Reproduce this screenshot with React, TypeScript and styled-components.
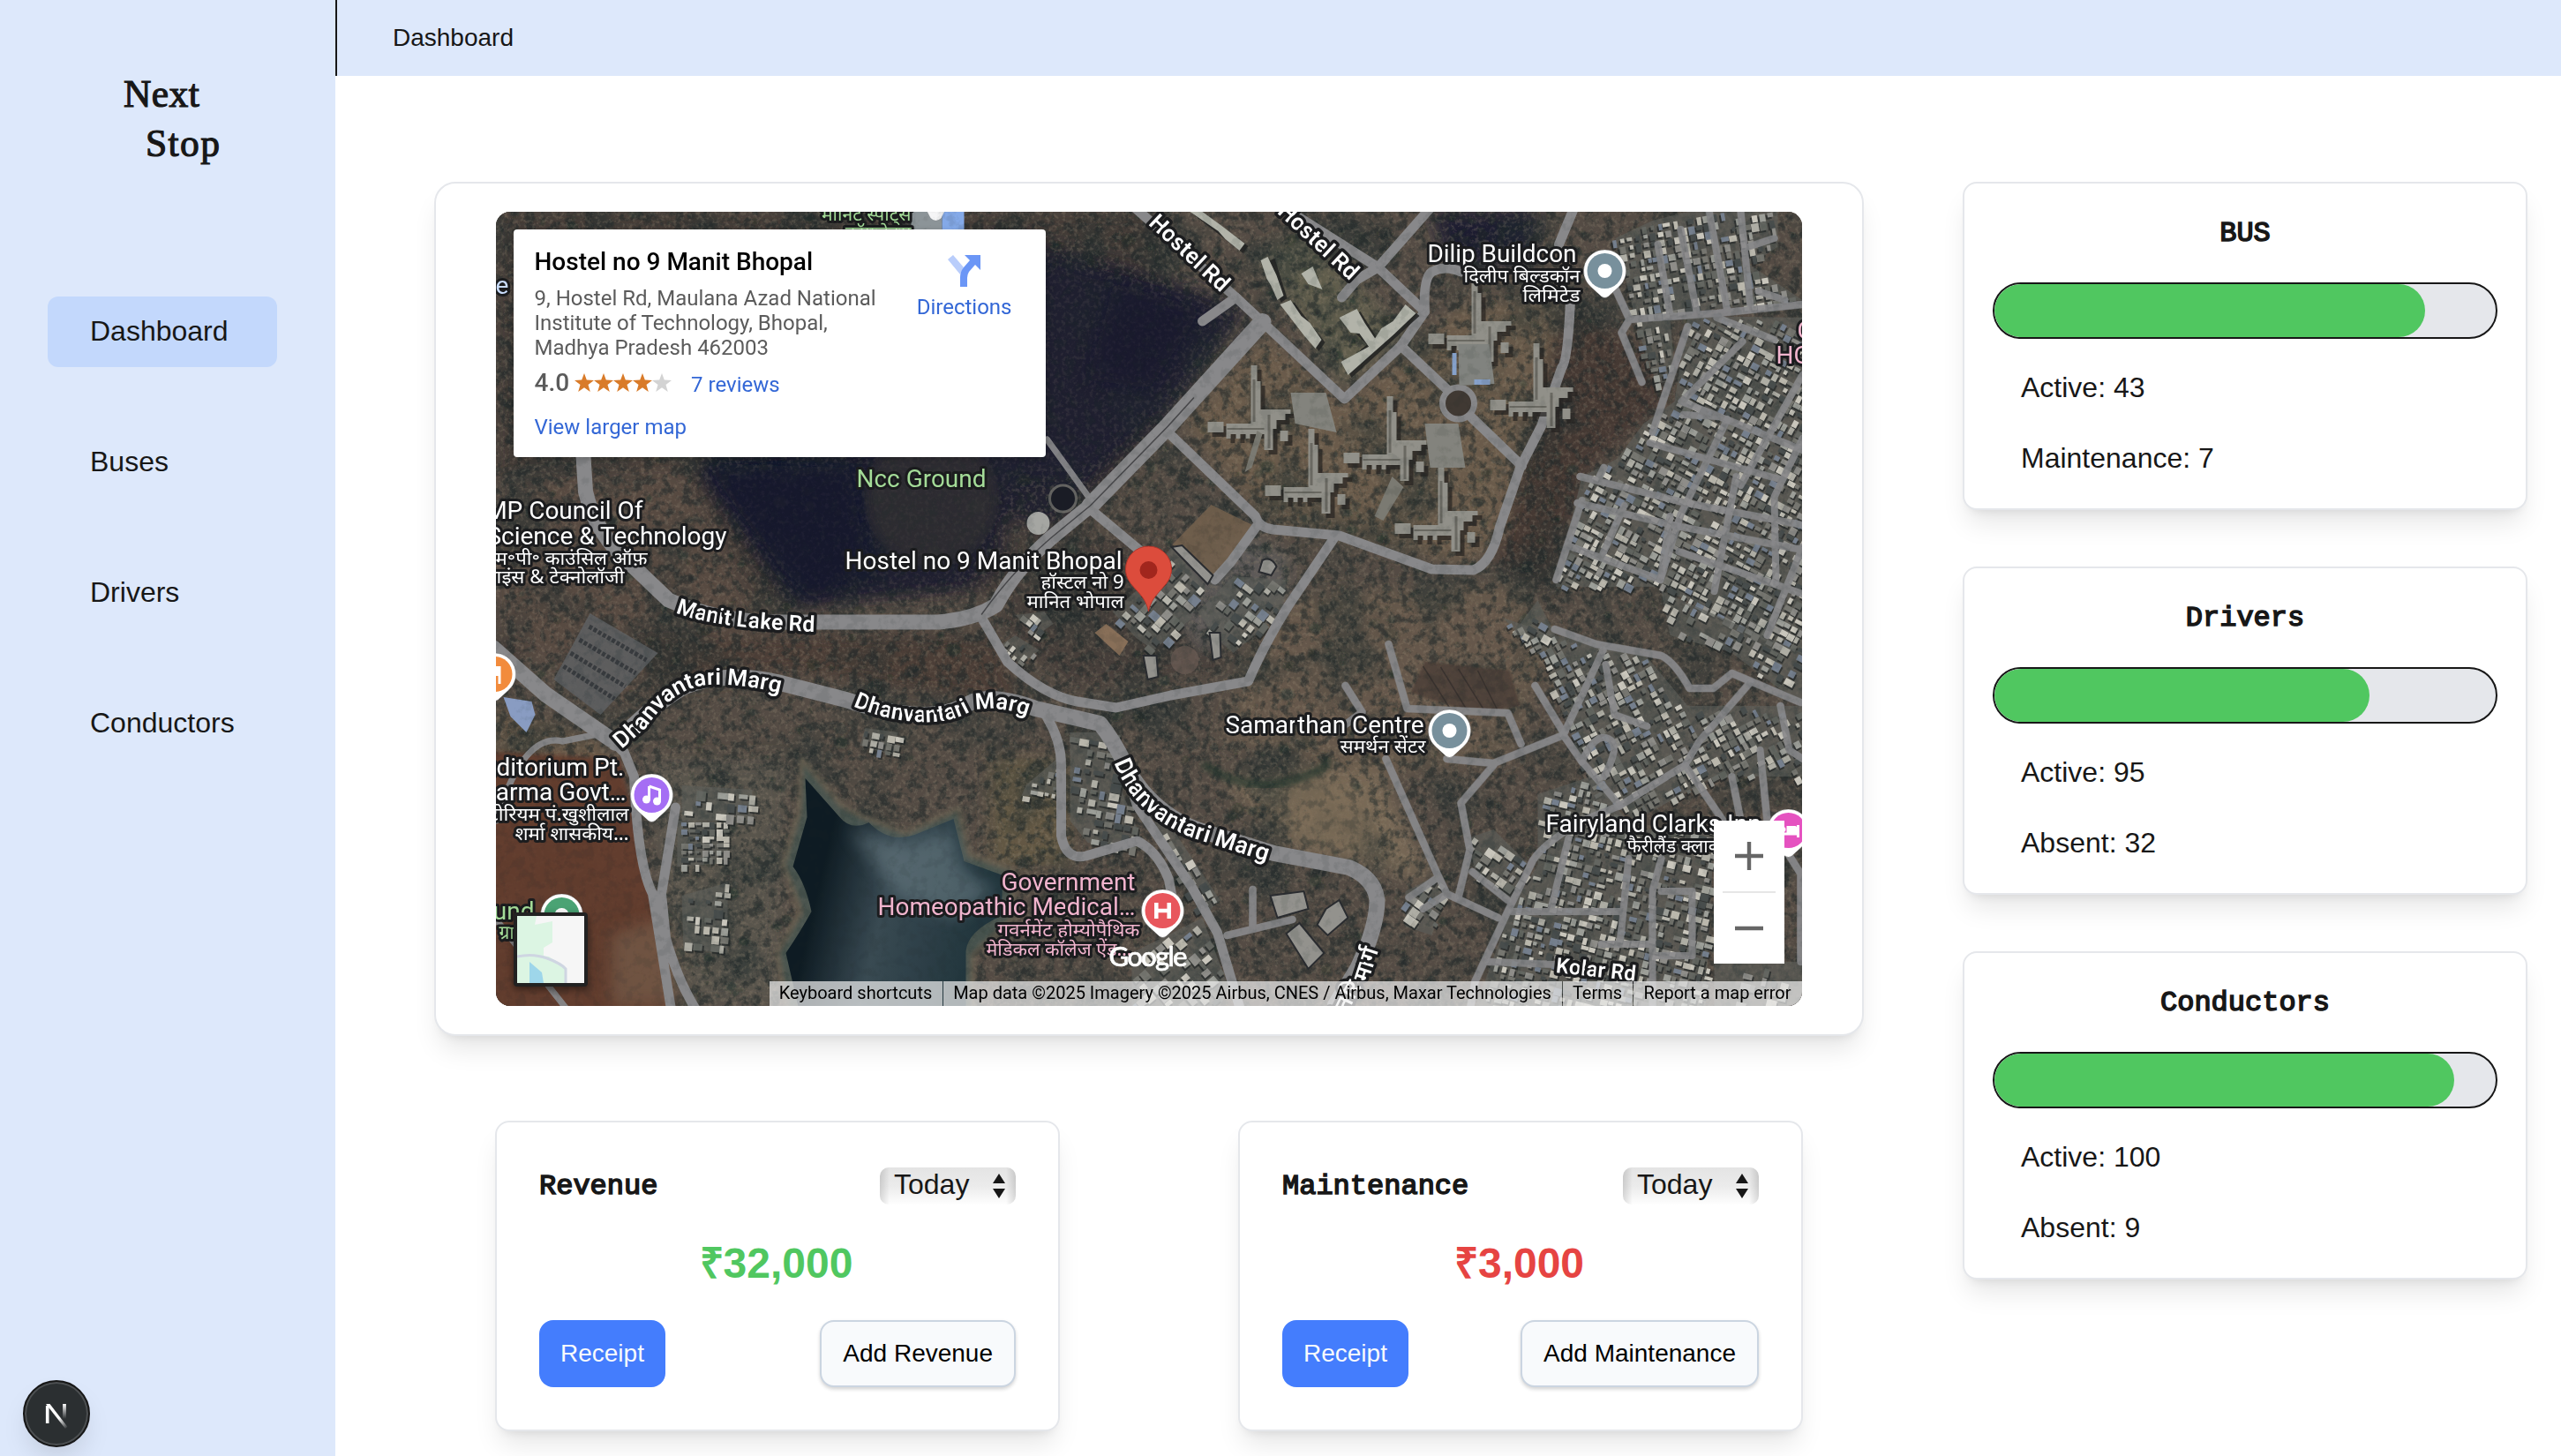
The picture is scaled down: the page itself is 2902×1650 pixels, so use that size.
import React from "react";
import styled, { createGlobalStyle } from "styled-components";

const sans = `"Liberation Sans", Arial, sans-serif`;
const roboto = `Roboto, "Noto Sans", sans-serif`;
const hindi = `"Noto Sans", "Noto Sans Devanagari", Roboto, sans-serif`;

const GlobalStyle = createGlobalStyle`
  *, *::before, *::after { box-sizing: border-box; }
  body { margin: 0; background: #fff; color: #171717; font-family: ${sans}; overflow: hidden; }
  h1, h2, p { margin: 0; }
`;

/* ---------- shell ---------- */

const Shell = styled.div`
  display: grid;
  grid-template-columns: 380px 1fr;
  height: 1650px;
  overflow: hidden;
  position: relative;
`;

const Sidebar = styled.aside`
  background: #dde8fb;
  padding: 78px 66px 0 54px;
`;

const Brand = styled.h1`
  height: 258px;
  padding-left: 86px;
  font: 400 43.5px/56px "Liberation Serif", serif;
  -webkit-text-stroke: 1.2px #171717;
`;

const BrandLine = styled.span<{ $indent?: number; $track: number }>`
  display: block;
  padding-left: ${(p) => p.$indent ?? 0}px;
  letter-spacing: ${(p) => p.$track}px;
`;

const Nav = styled.nav`
  display: flex;
  flex-direction: column;
  gap: 68px;
`;

const NavItem = styled.a<{ $active?: boolean }>`
  display: flex;
  align-items: center;
  height: 80px;
  padding: 0 0 2px 48px;
  border-radius: 12px;
  font-size: 32px;
  background: ${(p) => (p.$active ? "#c3d8fc" : "transparent")};
`;

const Page = styled.div`
  display: flex;
  flex-direction: column;
  min-width: 0;
`;

const TopBar = styled.header`
  display: flex;
  align-items: center;
  flex: none;
  height: 86px;
  padding-left: 63px;
  border-left: 2px solid #171717;
  background: #dde8fb;
  font-size: 28px;
`;

const Content = styled.main`
  display: flex;
  gap: 112px;
  padding: 120px 38px 0 112px;
`;

const Card = styled.section`
  border: 2px solid #e5e7eb;
  border-radius: 16px;
  background: #fff;
  box-shadow: 0 20px 30px -6px rgba(0, 0, 0, 0.1), 0 8px 12px -8px rgba(0, 0, 0, 0.1);
`;

const MainColumn = styled.div`
  display: flex;
  flex-direction: column;
  gap: 96px;
  width: 1620px;
  flex: none;
`;

const MapCard = styled(Card)`
  padding: 32px 68.5px 32px 67.5px;
  border-radius: 24px;
`;

const FinanceRow = styled.div`
  display: flex;
  justify-content: space-between;
  padding: 0 69px;
`;

const StatColumn = styled.div`
  display: flex;
  flex-direction: column;
  gap: 64px;
  width: 640px;
  flex: none;
`;

const Title = styled.h2`
  font: 400 32px/48px "Liberation Mono", monospace;
  padding-top: 1px;
  margin-bottom: -1px;
  -webkit-text-stroke: 1.6px #171717;
`;

/* ---------- staff / fleet cards ---------- */

const StatCard = styled(Card)`
  display: flex;
  flex-direction: column;
  gap: 32px;
  padding: 32px;
  ${Title} { text-align: center; }
`;

const Track = styled.div`
  height: 64px;
  border: 2px solid #171717;
  border-radius: 32px;
  background: #e5e7eb;
  overflow: hidden;
`;

const Fill = styled.div`
  height: 100%;
  border-radius: 32px;
  background: #50c760;
`;

const StatLine = styled.p`
  padding-left: 32px;
  height: 48px;
  font-size: 32px;
  line-height: 46px;
`;

interface Stat {
  title: string;
  active: number;
  restLabel: string;
  rest: number;
}

const stats: Stat[] = [
  { title: "BUS", active: 43, restLabel: "Maintenance", rest: 7 },
  { title: "Drivers", active: 95, restLabel: "Absent", rest: 32 },
  { title: "Conductors", active: 100, restLabel: "Absent", rest: 9 },
];

function StatPanel({ stat }: { stat: Stat }) {
  const share = (stat.active / (stat.active + stat.rest)) * 100;
  return (
    <StatCard>
      <Title>{stat.title}</Title>
      <Track>
        <Fill style={{ width: `${share}%` }} />
      </Track>
      <StatLine>Active: {stat.active}</StatLine>
      <StatLine>
        {stat.restLabel}: {stat.rest}
      </StatLine>
    </StatCard>
  );
}

/* ---------- finance cards ---------- */

const FinanceCard = styled(Card)`
  display: flex;
  flex-direction: column;
  gap: 32px;
  width: 640px;
  padding: 48px;
`;

const Row = styled.div`
  display: flex;
  align-items: center;
  justify-content: space-between;
`;

const Picker = styled.div`
  display: flex;
  align-items: center;
  justify-content: space-between;
  width: 154px;
  height: 42px;
  margin: 3px 0;
  padding: 0 12px 0 16px;
  border-radius: 10px;
  background: linear-gradient(90deg, rgba(0, 0, 0, 0.13), transparent 11px, transparent 143px, rgba(0, 0, 0, 0.13)),
    linear-gradient(#e4e4e4, #ebebeb 50%, #fefefe);
  font-size: 32px;
  line-height: 38px;
  span { padding-bottom: 4px; }
`;

const Amount = styled.p<{ $tone: string }>`
  padding-right: 3px;
  text-align: center;
  font-size: 48px;
  font-weight: 700;
  line-height: 64px;
  color: ${(p) => p.$tone};
`;

const Button = styled.button<{ $primary?: boolean }>`
  height: 76px;
  padding: 0 24px;
  border: ${(p) => (p.$primary ? "0" : "2px solid #cbd5e1")};
  border-radius: 16px;
  background: ${(p) => (p.$primary ? "#447dfd" : "#f8fafc")};
  color: ${(p) => (p.$primary ? "#f8fafc" : "#000")};
  box-shadow: ${(p) => (p.$primary ? "none" : "0 2px 4px rgba(0,0,0,.1), 0 3px 5px -1px rgba(0,0,0,.1)")};
  font: 400 28px ${sans};
`;

function FinancePanel({ title, amount, tone }: { title: string; amount: string; tone: string }) {
  return (
    <FinanceCard>
      <Row>
        <Title>{title}</Title>
        <Picker>
          <span>Today</span>
          <svg width="14" height="28" viewBox="0 0 14 28" fill="#171717">
            <path d="M7 0 14 11H0ZM0 17H14L7 28Z" />
          </svg>
        </Picker>
      </Row>
      <Amount $tone={tone}>{amount}</Amount>
      <Row>
        <Button $primary>Receipt</Button>
        <Button>Add {title}</Button>
      </Row>
    </FinanceCard>
  );
}

/* ---------- satellite map ---------- */

const MapFrame = styled.div`
  position: relative;
  width: 1480px;
  height: 900px;
  border-radius: 16px;
  overflow: hidden;
  background: #3a342d;
`;

const MapCanvas = styled.svg`
  display: block;
`;

const PlaceCard = styled.div`
  position: absolute;
  left: 20px;
  top: 20px;
  width: 603px;
  height: 258px;
  padding: 21px 38px 0 24px;
  display: flex;
  justify-content: space-between;
  border-radius: 4px;
  background: #fff;
  box-shadow: 0 2px 8px -2px rgba(0, 0, 0, 0.3);
  font: 400 24px/28px ${roboto};
  color: #5b5b5b;
`;

const PlaceName = styled.div`
  font-size: 28px;
  font-weight: 500;
  line-height: 32px;
  color: #000;
  margin-bottom: 11px;
`;

const Address = styled.div`
  width: 410px;
`;

const Rating = styled.div`
  display: flex;
  align-items: center;
  height: 32px;
  margin-top: 10px;
  b { font-size: 28px; font-weight: 500; margin-right: 6px; }
`;

const MapLink = styled.a`
  color: #3367d6;
`;

const Reviews = styled(MapLink)`
  margin: 3px 0 0 22px;
`;

const LargerMap = styled(MapLink)`
  display: block;
  margin-top: 20px;
`;

const Directions = styled(MapLink)`
  display: flex;
  flex-direction: column;
  align-items: center;
  gap: 9px;
  padding-top: 8px;
`;

const ZoomBox = styled.div`
  position: absolute;
  right: 20px;
  top: 690px;
  width: 80px;
  height: 162px;
  background: #fff;
  display: grid;
  place-items: center;
`;

const LayerThumb = styled.div`
  position: absolute;
  left: 20px;
  top: 794px;
  width: 84px;
  height: 84px;
  border: 4px solid #222;
  border-radius: 4px;
  background: #f6f6f6;
  box-shadow: 0 3px 8px rgba(0, 0, 0, 0.5);
  svg { display: block; }
`;

const Attribution = styled.div`
  position: absolute;
  right: 0;
  bottom: 0;
  height: 28px;
  display: flex;
  font: 400 20px/27px ${roboto};
  color: #000;
`;

const Credit = styled.span<{ $w: number }>`
  width: ${(p) => p.$w}px;
  height: 28px;
  text-align: center;
  white-space: nowrap;
  background: rgba(240, 240, 240, 0.7);
  & + & { margin-left: 1px; }
`;

type Pt = [number, number];

function seeded(seed: number) {
  let s = seed;
  return () => {
    s = (s + 0x6d2b79f5) | 0;
    let t = Math.imul(s ^ (s >>> 15), 1 | s);
    t = (t + Math.imul(t ^ (t >>> 7), 61 | t)) ^ t;
    return ((t ^ (t >>> 14)) >>> 0) / 4294967296;
  };
}

function inside([x, y]: Pt, poly: Pt[]) {
  let hit = false;
  for (let i = 0, j = poly.length - 1; i < poly.length; j = i++) {
    const [xi, yi] = poly[i];
    const [xj, yj] = poly[j];
    if (yi > y !== yj > y && x < ((xj - xi) * (y - yi)) / (yj - yi) + xi) hit = !hit;
  }
  return hit;
}

interface District {
  poly: Pt[];
  angle: number;
  step: number;
  fill: number;
}

const districts: District[] = [
  { poly: [[1268, 30], [1310, 10], [1350, 0], [1452, 0], [1452, 40], [1420, 60], [1480, 100], [1385, 110], [1290, 118]], angle: 80, step: 9, fill: 0.85 },
  { poly: [[1290, 125], [1330, 122], [1336, 190], [1315, 195]], angle: 80, step: 9, fill: 0.9 },
  { poly: [[1350, 118], [1480, 120], [1480, 500], [1420, 480], [1320, 425], [1200, 425], [1230, 300], [1270, 280], [1300, 240], [1335, 215]], angle: 28, step: 9, fill: 0.85 },
  { poly: [[1140, 460], [1200, 480], [1300, 500], [1350, 560], [1480, 560], [1480, 640], [1380, 640], [1290, 690], [1240, 650], [1205, 560], [1190, 510]], angle: 62, step: 9, fill: 0.72 },
  { poly: [[1320, 430], [1480, 500], [1480, 560], [1400, 500], [1330, 480]], angle: 28, step: 10, fill: 0.65 },
  { poly: [[1180, 660], [1240, 640], [1290, 700], [1380, 700], [1370, 900], [1110, 900], [1150, 790], [1180, 740]], angle: 14, step: 9, fill: 0.75 },
  { poly: [[1030, 770], [1070, 750], [1075, 775], [1060, 820], [1030, 810]], angle: 35, step: 10, fill: 0.7 },
  { poly: [[1100, 710], [1130, 700], [1170, 740], [1150, 780], [1110, 750]], angle: 35, step: 10, fill: 0.5 },
  { poly: [[1380, 850], [1480, 850], [1480, 900], [1380, 900]], angle: 14, step: 11, fill: 0.5 },
  { poly: [[650, 590], [700, 590], [710, 660], [735, 720], [670, 715], [650, 690]], angle: 10, step: 11, fill: 0.8 },
  { poly: [[600, 650], [635, 620], [638, 660], [595, 662]], angle: 10, step: 8, fill: 0.85 },
  { poly: [[730, 660], [760, 690], [820, 780], [800, 800], [770, 740]], angle: 60, step: 10, fill: 0.7 },
  { poly: [[720, 840], [800, 800], [830, 880], [820, 900], [720, 900]], angle: 50, step: 11, fill: 0.5 },
  { poly: [[205, 690], [262, 692], [262, 738], [205, 742]], angle: 0, step: 8, fill: 0.95 },
  { poly: [[210, 650], [290, 655], [290, 690], [210, 690]], angle: 5, step: 12, fill: 0.75 },
  { poly: [[210, 775], [262, 760], [262, 840], [212, 835]], angle: 5, step: 10, fill: 0.6 },
  { poly: [[418, 585], [455, 590], [450, 616], [412, 605]], angle: 10, step: 9, fill: 0.9 },
  { poly: [[1180, 440], [1200, 480], [1150, 480]], angle: 30, step: 10, fill: 0.6 },
  { poly: [[698, 453], [728, 427], [765, 380], [805, 427], [785, 463], [745, 497], [725, 483]], angle: 42, step: 11, fill: 0.8 },
  { poly: [[795, 453], [835, 413], [895, 417], [891, 453], [835, 500], [812, 480]], angle: 38, step: 11, fill: 0.75 },
  { poly: [[588, 457], [621, 453], [631, 467], [611, 481]], angle: 38, step: 8, fill: 0.8 },
  { poly: [[568, 493], [588, 480], [615, 497], [595, 513]], angle: 38, step: 8, fill: 0.8 },
];

const roofs = ["#b3b2a7", "#d0cdc1", "#91908a", "#77776f", "#63665f", "#a0a29a", "#c0bdb0", "#76818f", "#454b49"];

function Housing() {
  const rnd = seeded(9);
  const out: React.ReactNode[] = [];
  districts.forEach((d, k) => {
    const a = (d.angle * Math.PI) / 180;
    const xs = d.poly.map((p) => p[0]);
    const ys = d.poly.map((p) => p[1]);
    const cx = (Math.min(...xs) + Math.max(...xs)) / 2;
    const cy = (Math.min(...ys) + Math.max(...ys)) / 2;
    out.push(<polygon key={`b${k}`} points={d.poly.join(" ")} fill="#5c5e58" opacity="0.65" />);
    for (let u = -360; u < 360; u += d.step) {
      for (let v = -360; v < 360; v += d.step) {
        const x = cx + u * Math.cos(a) - v * Math.sin(a);
        const y = cy + u * Math.sin(a) + v * Math.cos(a);
        if (!inside([x, y], d.poly) || rnd() > d.fill) continue;
        const w = d.step * (0.45 + rnd() * 0.65);
        const h = d.step * (0.4 + rnd() * 0.6);
        const c = roofs[Math.floor(rnd() * roofs.length)];
        out.push(
          <g key={`${k}-${u}-${v}`} transform={`translate(${x.toFixed(1)} ${y.toFixed(1)}) rotate(${d.angle})`}>
            <rect x={2} y={2} width={w} height={h} fill="#171b1b" opacity=".65" />
            <rect width={w} height={h} fill={c} />
          </g>,
        );
      }
    }
  });
  return <g>{out}</g>;
}

function Trees() {
  const rnd = seeded(41);
  const out: React.ReactNode[] = [];
  for (let i = 0; i < 1800; i++) {
    const x = rnd() * 1480;
    const y = rnd() * 900;
    const r = 1.5 + rnd() * rnd() * 9;
    if (x > 330 && x < 580 && y > 640) continue;
    if (x < 190 && y > 600) continue;
    out.push(
      <ellipse key={i} cx={x.toFixed(1)} cy={y.toFixed(1)} rx={r.toFixed(1)} ry={(r * 0.85).toFixed(1)}
        fill={rnd() > 0.3 ? "#1b2723" : "#2a352e"} opacity={(0.3 + rnd() * 0.4).toFixed(2)} />,
    );
  }
  return <g filter="url(#leaf)">{out}</g>;
}

/* Comb-shaped campus blocks */
function CampusBlock({ x, y }: { x: number; y: number }) {
  const shape =
    "M15-16h7v18h4v32h34v5h-6v7H44v10h-4v24H30V62H14v5h-5v-5H3v5h-5v-5h-6v5h-5V50H15ZM-34 48h18v12h-18zM48 58h9v12h-9z";
  return (
    <g transform={`translate(${x} ${y})`}>
      <path d={shape} transform="translate(5 5)" fill="#1f1d1a" opacity=".7" />
      <path d={shape} fill="#94938a" />
      <path d="M17 0h3v48h-3zM-12 55H30v2H-12zM34 40h3v38h-3z" fill="#6a6960" />
    </g>
  );
}

const wideRoads = [
  "M98 270 101 317Q112 365 153 400L195 440Q240 460 300 465H500Q540 462 566 446Q590 400 640 360L673 333 761 243 868 125",
  "M-4 494 56 547 130 598M135 602Q175 560 213 538Q260 520 318 533L396 553Q440 568 478 570 510 572 540 555 565 546 611 563L684 580Q700 600 712 626Q740 680 794 700L881 727 966 743Q995 755 998 780Q998 810 976 857L950 900",
];

const midRoads = [
  "M722-6 838 97 868 125 961 212 1025 152 1052 113 999 63 890-6",
  "M958 97 975 77 999 63 1058-4",
  "M1025 152 1078 202M1105 233 1162 288",
  "M1221-4 1204 37M1217 100Q1214 170 1207 177L1184 243 1160 290 1137 357Q1128 398 1107 406L1060 405 955 367 880 360Q864 358 860 345L758 247",
  "M1052 113Q1050 75 1060 68 1075 60 1093 68",
  "M548 457 579 510Q620 548 658 555L702 562 764 548 852 532Q870 490 897 447L949 370",
  "M861 357 832 397 814 417M838 97 800 124",
  "M673 337 740 393",
  "M130 598 145 613 156 640Q160 740 177 773L198 904M203 675 187 773 192 823Q205 870 226 904",
  "M624 573Q640 600 640 627V707Q645 735 668 730L726 713Q750 725 762 757L770 800",
  "M712 626 726 673 789 767 817 817 843 904",
];

const thinRoads = [
  "M828 820 902 802M857 768V810",
  "M1008 620 1066 750 1077 773 1135 800M1077 773 1050 790M1066 755 1034 777",
  "M1077 620 1130 625 1209 593M1130 627 1093 670 1103 723 1090 777",
  "M1254 497 1209 593 1230 623 1273 673 1347 627 1363 600 1421 533",
  "M1177 537 1209 590M1011 490 1032 563 1146 568 1161 603M962 537 981 567 950 590",
  "M1199 473 1246 490 1320 503Q1335 510 1352 540H1379L1400 523 1478 556",
  "M1257 513 1267 570 1304 583M1273 673 1230 690Q1180 720 1172 740L1146 793 1109 872 1104 900",
  "M1151 793H1273M1215 710 1195 790M1283 733 1273 830M1320 733 1310 770V900M1320 770H1355V843H1310M1252 830H1310M1124 850 1200 853",
  "M1347 627 1390 690M1230 623Q1245 590 1260 597T1255 640M1106 748 1146 780",
  "M1284 122 1383 115 1480 105M1266 83 1284 122 1275 137 1298 193M1316 37 1330 117M1342 20 1360 113M1374-2 1395 113M1410 0 1421 107M1418 40 1448 30M1430 90 1460 100",
  "M1383 120 1448 145M1412 147 1343 215 1480 270M1345 230 1385 232M1480 185 1410 310",
  "M1307 262 1454 303M1310 250 1350 130M1228 300 1348 330 1480 355M1395 235 1342 343 1319 417M1255 290 1250 300M1480 257 1448 323 1450 420",
  "M1230 327 1201 417M1278 333 1254 387M1225 330 1342 357 1480 383M1219 380 1319 417M1340 385 1480 433M1319 417 1330 345M1405 300 1380 430M1480 380 1440 480",
  "M1400 640 1410 690M1432 610 1440 690M1455 560 1465 610 1480 620M1440 690 1478 750V850",
  "M0 690Q30 590 75 600L115 592M-2 800 80 904M624 258 676 330",
];

function Label({ x, y, children, color = "#fff", size = 28, anchor = "start", font = roboto, len }: {
  x: number; y: number; children: React.ReactNode; color?: string; size?: number; anchor?: "start" | "end"; font?: string; len?: number;
}) {
  return (
    <text x={x} y={y} fill={color} fontFamily={font} fontSize={size} textAnchor={anchor} textLength={len}
      lengthAdjust={font === hindi ? "spacingAndGlyphs" : "spacing"}
      stroke="#1b1c1e" strokeWidth={6} strokeLinejoin="round" paintOrder="stroke">
      {children}
    </text>
  );
}

function Hindi(props: { x: number; y: number; children: React.ReactNode; color?: string; anchor?: "start" | "end"; len?: number }) {
  return <Label {...props} size={21} font={hindi} anchor={props.anchor ?? "end"} />;
}

function Pin({ x, y, color, children }: { x: number; y: number; color: string; children?: React.ReactNode }) {
  return (
    <g transform={`translate(${x} ${y})`}>
      <path d="M0-24A24 24 0 0 1 16 18L4 29Q0 32-4 29L-16 18A24 24 0 0 1 0-24Z" fill="#fff" stroke="#222" strokeOpacity=".3" />
      <circle r="20" fill={color} />
      {children}
    </g>
  );
}

function RoadName({ id, children, size = 26, font = roboto }: { id: string; children: React.ReactNode; size?: number; font?: string }) {
  return (
    <text fontFamily={font} fontWeight={600} fontSize={size} fill="#fff" stroke="#1b1c1e" strokeWidth={7} strokeLinejoin="round" paintOrder="stroke">
      <textPath href={`#${id}`}>{children}</textPath>
    </text>
  );
}

const pink = "#f1b4cd";
const green = "#a4dc98";

function Satellite() {
  return (
    <MapCanvas width="1480" height="900" viewBox="-0.5 0 1480 900">
      <defs>
        <filter id="soft" x="-20%" y="-20%" width="140%" height="140%"><feGaussianBlur stdDeviation="9" /></filter>
        <filter id="soft2" x="-10%" y="-10%" width="120%" height="120%"><feGaussianBlur stdDeviation="2.5" /></filter>
        <filter id="leaf" x="0" y="0" width="100%" height="100%"><feGaussianBlur stdDeviation="1" /></filter>
        <filter id="scrub" x="0" y="0" width="100%" height="100%" colorInterpolationFilters="sRGB">
          <feTurbulence type="fractalNoise" baseFrequency="0.09" numOctaves="5" seed="4" />
          <feColorMatrix values="0 0 0 0 0.1  0 0 0 0 0.14  0 0 0 0 0.14  5 0 0 0 -2.4" />
        </filter>
        <filter id="grain" x="0" y="0" width="100%" height="100%" colorInterpolationFilters="sRGB">
          <feTurbulence type="fractalNoise" baseFrequency="0.22" numOctaves="3" seed="8" />
          <feColorMatrix values="0 0 0 0 0.62  0 0 0 0 0.56  0 0 0 0 0.47  0 4 0 0 -1.9" />
        </filter>
        <filter id="patch" x="0" y="0" width="100%" height="100%" colorInterpolationFilters="sRGB">
          <feTurbulence type="fractalNoise" baseFrequency="0.013" numOctaves="4" seed="21" />
          <feColorMatrix values="0 0 0 0 0.11  0 0 0 0 0.16  0 0 0 0 0.16  4 0 0 0 -1.9" />
        </filter>
        <linearGradient id="water" x1="0" y1="0" x2="1" y2="0.25">
          <stop offset=".25" stopColor="#07151c" /><stop offset=".55" stopColor="#35474f" /><stop offset="1" stopColor="#1c3138" />
        </linearGradient>
        <path id="r1" d="M738 14 821 92" />
        <path id="r2" d="M884 1 970 81" />
        <path id="r3" d="M203 454Q245 472 362 476" />
        <path id="r4" d="M142 609 170 584Q202 538 242 536T338 550" />
        <path id="r5" d="M404 560Q440 576 478 578Q512 580 536 567Q570 555 620 579" />
        <path id="r6" d="M700 624Q722 684 790 710L910 748" />
        <path id="r7" d="M1200 862 1304 873" />
        <path id="r8" d="M950 946Q968 892 990 866L1010 806 1014 750" />
      </defs>

      <rect x="-4" width="1488" height="900" fill="#524940" />
      <g filter="url(#soft)">
        <path d="M0 0H760V250L600 430 330 450 100 400 0 560Z" fill="#413933" />
        <path d="M560 20 720 60 850 110 760 230 640 350 540 430 330 445 220 290 540 200Z" fill="#1d1e2c" />
        <path d="M230 270 420 280 440 420 340 440Z" fill="#0f1226" />
        <path d="M0 300 210 290 300 460 130 560 0 480Z" fill="#54463d" />
        <path d="M150 480 560 480 600 560 330 520 180 540Z" fill="#483a33" />
        <path d="M870 140 960 220 1030 160 1100 100 1215 100 1150 360 1100 400 870 350 780 240Z" fill="#6b5a47" />
        <path d="M860 50 920 20 1030 140 960 200Z" fill="#5f5b4a" />
        <path d="M1060 0H1180L1170 60 1080 60Z" fill="#151829" />
        <path d="M1210 100 1290 150 1330 210 1240 290 1190 430 1130 400Z" fill="#42362f" />
        <path d="M880 440 1150 420 1200 480 1150 620 1000 640 820 600Z" fill="#655746" />
        <path d="M820 640 1000 630 1060 760 900 720Z" fill="#786752" />
        <path d="M580 350 740 380 850 420 820 520 650 540 570 470Z" fill="#433a34" />
        <path d="M820 350 900 390 900 440 800 500 750 430Z" fill="#5c5955" />
        <path d="M170 620H330L320 900H200Z" fill="#59534a" />
        <path d="M560 620H650V740H560Z" fill="#62563f" />
        <path d="M0 560 120 600 140 680 0 700Z" fill="#6a5844" />
      </g>
      <rect x="-4" width="1488" height="900" filter="url(#patch)" opacity=".5" />
      <Trees />
      <rect x="-4" width="1488" height="900" filter="url(#scrub)" opacity=".5" />
      <rect x="-4" width="1488" height="900" filter="url(#grain)" opacity=".26" />
      <path d="M560 40 700 75 830 120 745 230 660 300 590 300 520 420 345 445 235 300 540 260Z" fill="#14172a" opacity=".5" filter="url(#soft)" />
      <path d="M235 285 400 290 420 400 360 440 320 400Z" fill="#0c0f26" opacity=".5" filter="url(#soft)" />
      <path d="M700 80 800 110 740 200 670 190Z" fill="#0c0f26" opacity=".45" filter="url(#soft)" />
      <path d="M-10 612 140 620 162 720 192 850 204 910H-10Z" fill="#643827" opacity=".9" filter="url(#soft2)" />
      <path d="M130 820 190 800 215 900H130Z" fill="#765b47" opacity=".7" filter="url(#soft)" />
      <circle cx="493" cy="325" r="76" fill="#35312f" opacity=".55" filter="url(#soft2)" />
      <circle cx="493" cy="325" r="72" fill="none" stroke="#1f1f2b" strokeWidth="5" opacity=".45" filter="url(#soft2)" />

      {/* parking yard and tennis fields */}
      <path d="M106 455 183 500 118 570 65 530Z" fill="#5d5f60" opacity=".85" />
      <path d="M105 470 170 508M94 485 158 523M84 500 146 538M76 515 134 552" stroke="#34373a" strokeWidth="5" strokeDasharray="4 2" />
      <path d="M766 377 810 332 861 357 813 413Z" fill="#75604a" opacity=".85" />
      <path d="M678 477 691 467 716 487 706 503Z" fill="#8a6f55" />
      <path d="M1036 545 1052 510 1148 520 1160 560 1110 568Z" fill="#493a31" opacity=".8" filter="url(#leaf)" />
      <path d="M1050 515 1080 562M1070 516 1100 565M1090 518 1120 566M1112 520 1135 566" stroke="#2c2724" strokeWidth="1.5" opacity=".7" />
      <path d="M8 550 40 555 44 570 34 590 16 572Z" fill="#8ba0c8" />
      <path d="M890 645Q930 620 965 650T990 720Q930 740 900 700Z" fill="#806e56" opacity=".6" filter="url(#soft)" />
      <path d="M800 625Q850 660 900 645T940 620" fill="none" stroke="#1d3028" strokeWidth="10" opacity=".6" filter="url(#soft2)" />

      {/* lake */}
      <path d="M346 620 391 672 412 684 464 704 524 676 536 728 586 746 586 800 540 842V905H330L318 840 345 793 325 740 343 680Z" fill="#46574f" stroke="#6c6351" strokeWidth="5" opacity=".8" filter="url(#soft2)" />
      <path d="M350 642 389 686Q402 702 422 692 445 716 474 706L518 688 530 736 574 752 572 798Q534 815 532 838V905H343L328 840Q345 815 357 793 350 760 336 742L352 686Z" fill="url(#water)" />
      <path d="M400 700 464 718 514 700 528 745 565 770 520 800 460 780Z" fill="#6d8188" opacity=".55" filter="url(#soft)" />

      {/* roads */}
      <g fill="none" stroke="#88888a" strokeLinecap="round" strokeLinejoin="round">
        {thinRoads.map((d, i) => <path key={i} d={d} strokeWidth={i === 14 ? 7 : 9} opacity=".55" />)}
      </g>
      <Housing />
      <g fill="none" stroke="#8a8a8b" strokeLinecap="round" strokeLinejoin="round">
        {thinRoads.map((d, i) => <path key={i} d={d} strokeWidth={i === 14 ? 7 : 8} opacity=".88" />)}
        {midRoads.map((d, i) => <path key={i} d={d} strokeWidth="11" />)}
        <circle cx="1090" cy="217" r="18" strokeWidth="7" fill="#3d352e" />
        {wideRoads.map((d, i) => <path key={i} d={d} strokeWidth={i ? 18 : 17} />)}
        <path d="M673 333 761 243 868 125" strokeWidth="20" />
        <path d="M550 456Q590 400 640 360L673 333 761 243 790 211" stroke="#444446" strokeWidth="1.5" />
      </g>

      {/* larger buildings */}
      <CampusBlock x={840} y={190} />
      <CampusBlock x={905} y={262} />
      <CampusBlock x={994} y={225} />
      <CampusBlock x={1052} y={305} />
      <CampusBlock x={1090} y={90} />
      <CampusBlock x={1160} y={165} />
      <path d="M900 205H940L952 250 905 240ZM1052 240H1090L1098 290H1058Z" fill="#85857d" />
      <path d="M1090 150h35l6 45-40 2Z" fill="#83857f" />
      <path d="M1083 160h5v25h-5zM1108 190h18v6h-18z" fill="#88a5d0" />
      <path d="M848 295 862 248 868 252 856 290ZM995 345 1015 300 1028 312 1005 350Z" fill="#7c7b71" />
      <g fill="#1b1c1b" transform="translate(4 3)" opacity=".85">
        <path d="M866 55 878 50 892 95 885 100ZM888 105 900 100 935 145 928 155ZM786 0 800 0 848 36 842 44ZM1030 105 1042 115 965 185 957 170ZM955 120 975 110 1000 150 990 155Z" />
      </g>
      <g fill="#b7b9ad">
        <path d="M866 55 874 51 884 72 892 95 885 100 878 84 873 76ZM888 105 900 100 912 118 922 126 935 145 928 155 915 140ZM786 0 800 0 822 16 848 36 842 44 826 31 818 22ZM1030 105 1042 115 1018 138 965 185 957 170 990 152 1003 132 1016 124ZM955 120 975 110 984 126 1000 150 990 155 978 138 968 137ZM912 70 925 62 936 88 920 82Z" />
      </g>
      <g fill="#96958f" stroke="#25272a" strokeWidth="2">
        <path d="M733 503 748 503 750 527 738 530ZM808 477 820 477 821 505 812 508ZM765 380 777 378 812 412 806 422ZM868 395Q878 390 884 402L878 412 864 408Z" />
        <path d="M940 790 955 780 965 800 942 820 930 808ZM895 818 910 806 938 840 920 858ZM877 775 915 770 920 790 885 800Z" />
      </g>
      <circle cx="642" cy="325" r="15" fill="#14161f" stroke="#77756f" strokeWidth="3" strokeOpacity=".8" />
      <circle cx="614" cy="353" r="13" fill="#a9aaa5" />
      <circle cx="780" cy="508" r="16" fill="#66584f" opacity=".8" />
      <path d="M470 0H505V20H470Z" fill="#8f979a" />
      <path d="M505 0H530V20H505Z" fill="#86aef0" />
      <path d="M478-20H518L504 7Q498 13 492 7Z" fill="#fff" />
      <rect x="-4" width="1488" height="900" filter="url(#scrub)" opacity=".1" />
      <rect x="-4" width="1488" height="900" fill="#6c7884" opacity=".07" />

      {/* road names */}
      <RoadName id="r1">Hostel Rd</RoadName>
      <RoadName id="r2">Hostel Rd</RoadName>
      <RoadName id="r3" size={25}>Manit Lake Rd</RoadName>
      <RoadName id="r4">Dhanvantari Marg</RoadName>
      <RoadName id="r5" size={25.5}>Dhanvantari Marg</RoadName>
      <RoadName id="r6" size={27}>Dhanvantari Marg</RoadName>
      <RoadName id="r7" size={24}>Kolar Rd</RoadName>
      <RoadName id="r8" font={hindi}>धन्वंतरि मार्ग</RoadName>

      {/* places */}
      <Label x={-1} y={93} color="#c9dcfb">e</Label>
      <Hindi x={470} y={10} color={green}>मानिट स्पोर्ट्स</Hindi>
      <Hindi x={470} y={31} color={green}>कॉम्प्लेक्स</Hindi>
      <Label x={408} y={312} color={green} len={147}>Ncc Ground</Label>
      <Label x={166} y={348} anchor="end">MP Council Of</Label>
      <Label x={261} y={377} anchor="end">Science &amp; Technology</Label>
      <Hindi x={171} y={400} len={172}>म॰पी॰ काउंसिल ऑफ़</Hindi>
      <Hindi x={145} y={421} len={160}>साइंस &amp; टेक्नोलॉजी</Hindi>
      <Label x={395} y={405} len={314}>Hostel no 9 Manit Bhopal</Label>
      <Hindi x={711} y={427} len={94}>हॉस्टल नो 9</Hindi>
      <Hindi x={711} y={449} len={110}>मानित भोपाल</Hindi>
      <Label x={1055} y={57} len={169}>Dilip Buildcon</Label>
      <Hindi x={1228} y={80} len={132}>दिलीप बिल्डकॉन</Hindi>
      <Hindi x={1228} y={102} len={65}>लिमिटेड</Hindi>
      <Label x={826} y={591} len={225}>Samarthan Centre</Label>
      <Hindi x={1053} y={613} len={97}>समर्थन सेंटर</Hindi>
      <Label x={1189} y={703}>Fairyland Clarks Inn</Label>
      <Hindi x={1281} y={726} anchor="start">फैरीलैंड क्लार्क्स इन</Hindi>
      <Label x={724} y={769} anchor="end" color={pink}>Government</Label>
      <Label x={432} y={797} color={pink} len={292}>Homeopathic Medical…</Label>
      <Hindi x={729} y={821} color={pink} len={161}>गवर्नमेंट होम्योपैथिक</Hindi>
      <Hindi x={555} y={843} anchor="start" color={pink} len={165}>मेडिकल कॉलेज ऐंड…</Hindi>
      <Label x={145} y={639} anchor="end">Auditorium Pt.</Label>
      <Label x={147} y={667} anchor="end">Sharma Govt…</Label>
      <Hindi x={150} y={690} len={200}>ऑडिटोरियम पं.खुशीलाल</Hindi>
      <Hindi x={150} y={712} len={129}>शर्मा शासकीय…</Hindi>
      <Label x={43} y={802} anchor="end" color={green}>Ground</Label>
      <Hindi x={3} y={824} anchor="start" color={green}>ग्राउंड</Hindi>
      <Label x={1474} y={144} color={pink}>C</Label>
      <Label x={1450} y={172} color={pink}>HO</Label>

      <Pin x={1256} y={67} color="#78909c"><circle r="8" fill="#fff" /></Pin>
      <Pin x={1080} y={588} color="#78909c"><circle r="8" fill="#fff" /></Pin>
      <Pin x={176} y={661} color="#a56ef4">
        <path d="M-3-10 9-6V6M-3-10V5" fill="none" stroke="#fff" strokeWidth="3" />
        <circle cx="-6" cy="5" r="4.5" fill="#fff" /><circle cx="6" cy="7" r="4.5" fill="#fff" />
      </Pin>
      <Pin x={74} y={797} color="#4aa374"><circle r="8" fill="#fff" /></Pin>
      <Pin x={-2} y={524} color="#f28b3c"><path d="M1-9H7V11H4V2H-4V-2Q-2-9 1-9Z" fill="#fff" /></Pin>
      <Pin x={755} y={792} color="#e8565c"><path d="M-8-10V10M8-10V10M-8 0H8" stroke="#fff" strokeWidth="5" transform="scale(.9)" /></Pin>
      <Pin x={1464} y={701} color="#e552c0">
        <path d="M-12-8V8M-12 4H11M11-6V8" stroke="#fff" strokeWidth="3" fill="none" />
        <path d="M-2-5H8Q11-4 11 0V4H-2Z" fill="#fff" /><circle cx="-6" cy="-1" r="3" fill="#fff" />
      </Pin>
      <path d="M739 453C735 430 713 425 713 405A26 26 0 0 1 765 405C765 425 743 430 739 453Z" fill="#dc4c3c" stroke="#b3362b" />
      <circle cx="739" cy="406" r="10" fill="#a1261d" />
      <text x="694" y="855" fill="#fff" fontFamily="Lato, sans-serif" fontWeight="500" fontSize="31" textLength="89" stroke="#fff" strokeWidth=".6">Google</text>
    </MapCanvas>
  );
}

const starPath = "M11 0 13.8 7.6 22 7.9 15.5 12.9 17.8 21 11 16.3 4.2 21 6.5 12.9 0 7.9 8.2 7.6Z";

function MapView() {
  return (
    <MapFrame>
      <Satellite />
      <PlaceCard>
        <div>
          <PlaceName>Hostel no 9 Manit Bhopal</PlaceName>
          <Address>9, Hostel Rd, Maulana Azad National Institute of Technology, Bhopal, Madhya Pradesh 462003</Address>
          <Rating>
            <b>4.0</b>
            <svg width="110" height="22" viewBox="0 0 110 22">
              {[0, 1, 2, 3, 4].map((i) => (
                <path key={i} d={starPath} transform={`translate(${i * 22} 0)`} fill={i < 4 ? "#d97b29" : "#d3d3d3"} />
              ))}
            </svg>
            <Reviews>7 reviews</Reviews>
          </Rating>
          <LargerMap>View larger map</LargerMap>
        </div>
        <Directions>
          <svg width="37" height="36" viewBox="0 0 37 36">
            <path d="M0 5 6 0 18 14 14 22Z" fill="#b9cdfb" />
            <path d="M14 36V25Q14 19 18 14L25 6 19 0H37V17L31 11 24 19Q22 22 22 26V36Z" fill="#6b96f6" />
          </svg>
          Directions
        </Directions>
      </PlaceCard>
      <LayerThumb>
        <svg width="76" height="76" viewBox="0 0 76 76">
          <path d="M0 0H22L20 10 40 6 40 30 30 36V46H0Z" fill="#dcf5e3" />
          <path d="M0 46 20 44 36 46 54 58V76H0Z" fill="#dcf5e3" />
          <path d="M14 52 28 64 30 76H14Z" fill="#9ed6ea" />
          <path d="M0 46Q18 42 34 48T55 60V76" fill="none" stroke="#cfd6e2" strokeWidth="3" />
        </svg>
      </LayerThumb>
      <ZoomBox>
        <svg width="80" height="162" viewBox="0 0 80 162">
          <path d="M24 40H56M40 24V56M24 122H56" stroke="#666" strokeWidth="4.4" />
          <path d="M10 81H70" stroke="#e6e6e6" strokeWidth="2" />
        </svg>
      </ZoomBox>
      <Attribution>
        <Credit $w={196}>Keyboard shortcuts</Credit>
        <Credit $w={701}>Map data ©2025 Imagery ©2025 Airbus, CNES / Airbus, Maxar Technologies</Credit>
        <Credit $w={79}>Terms</Credit>
        <Credit $w={191}>Report a map error</Credit>
      </Attribution>
    </MapFrame>
  );
}

/* ---------- dev badge ---------- */

const DevBadge = styled.div`
  position: absolute;
  left: 26px;
  top: 1564px;
  width: 76px;
  height: 76px;
  border-radius: 50%;
  border: 2px solid #171717;
  background: #2b2f31;
  box-shadow: inset 0 0 0 2px #4d5052, 0 16px 32px -8px rgba(0, 0, 0, 0.15);
  svg { display: block; }
`;

function NextBadge() {
  return (
    <DevBadge>
      <svg width="72" height="72" viewBox="0 0 72 72" fill="none">
        <defs>
          <linearGradient id="nd" x1="38" y1="42" x2="48" y2="53" gradientUnits="userSpaceOnUse">
            <stop stopColor="#fff" /><stop offset="1" stopColor="#fff" stopOpacity="0" />
          </linearGradient>
          <linearGradient id="nv" x1="45" y1="25" x2="45" y2="42" gradientUnits="userSpaceOnUse">
            <stop stopColor="#fff" /><stop offset="1" stopColor="#fff" stopOpacity="0" />
          </linearGradient>
        </defs>
        <path d="M25.7 47V27" stroke="#fff" strokeWidth="3.6" />
        <path d="M24 25H28.5L48.5 51 46 53 24 25Z" fill="url(#nd)" />
        <path d="M45 25V42" stroke="url(#nv)" strokeWidth="3.8" />
      </svg>
    </DevBadge>
  );
}

export default function App() {
  return (
    <>
      <GlobalStyle />
      <Shell>
        <Sidebar>
          <Brand>
            <BrandLine $track={0.4}>Next</BrandLine>
            <BrandLine $track={1.4} $indent={25}>Stop</BrandLine>
          </Brand>
          <Nav>
            <NavItem $active>Dashboard</NavItem>
            <NavItem>Buses</NavItem>
            <NavItem>Drivers</NavItem>
            <NavItem>Conductors</NavItem>
          </Nav>
        </Sidebar>
        <Page>
          <TopBar>Dashboard</TopBar>
          <Content>
            <MainColumn>
              <MapCard>
                <MapView />
              </MapCard>
              <FinanceRow>
                <FinancePanel title="Revenue" amount="₹32,000" tone="#50c760" />
                <FinancePanel title="Maintenance" amount="₹3,000" tone="#e64442" />
              </FinanceRow>
            </MainColumn>
            <StatColumn>
              {stats.map((s) => (
                <StatPanel key={s.title} stat={s} />
              ))}
            </StatColumn>
          </Content>
        </Page>
        <NextBadge />
      </Shell>
    </>
  );
}
